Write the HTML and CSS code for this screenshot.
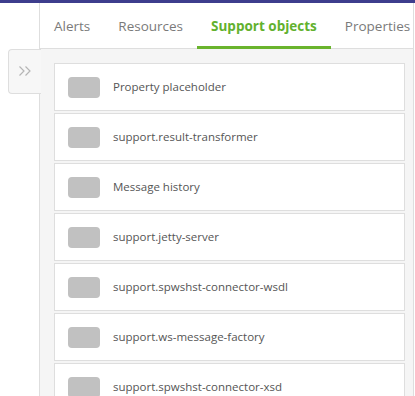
FILE: index.html
```html
<!DOCTYPE html>
<html>
<head>
<meta charset="utf-8">
<link rel="stylesheet" href="styles.css">
</head>
<body>
<div class="topbar"></div>
<div class="layout">
  <div class="sidebar">
    <div class="expand">
      <svg width="14" height="12" viewBox="0 0 14 12"><path d="M1.5 1.5 L6 6 L1.5 10.5 M7.5 1.5 L12 6 L7.5 10.5" fill="none" stroke="#b5b5b5" stroke-width="1.2"/></svg>
    </div>
  </div>
  <div class="panel">
    <div class="tabs">
      <div class="tab">Alerts</div>
      <div class="tab">Resources</div>
      <div class="tab active">Support objects</div>
      <div class="tab">Properties</div>
    </div>
    <div class="content">
      <div class="card"><span class="icon"></span><span class="label">Property placeholder</span></div>
      <div class="card"><span class="icon"></span><span class="label">support.result-transformer</span></div>
      <div class="card"><span class="icon"></span><span class="label">Message history</span></div>
      <div class="card"><span class="icon"></span><span class="label">support.jetty-server</span></div>
      <div class="card"><span class="icon"></span><span class="label">support.spwshst-connector-wsdl</span></div>
      <div class="card"><span class="icon"></span><span class="label">support.ws-message-factory</span></div>
      <div class="card"><span class="icon"></span><span class="label">support.spwshst-connector-xsd</span></div>
    </div>
  </div>
</div>
</body>
</html>
```
FILE: styles.css
```css
html, body {
  margin: 0;
  padding: 0;
  height: 100%;
  overflow: hidden;
  background: #fff;
  font-family: "Open Sans", "Liberation Sans", sans-serif;
}
.topbar {
  height: 3px;
  background: #3d3d8d;
}
.layout {
  display: flex;
  height: 393px;
}
.sidebar {
  width: 39px;
  flex: none;
  border-right: 1px solid #dedede;
  position: relative;
}
.expand {
  position: absolute;
  top: 46px;
  left: 8px;
  width: 31px;
  height: 42px;
  background: #f7f7f7;
  border: 1px solid #dedede;
  border-right: none;
  border-radius: 4px 0 0 4px;
  display: flex;
  align-items: center;
  justify-content: center;
  padding-right: 1px;
  padding-bottom: 1px;
}
.panel {
  width: 373px;
  flex: none;
  border-right: 1px solid #dedede;
  display: flex;
  flex-direction: column;
  overflow: hidden;
}
.tabs {
  display: flex;
  height: 45px;
  border-bottom: 1px solid #dedede;
  background: #fff;
}
.tab {
  padding: 2px 14px 0;
  font-size: 13.5px;
  color: #7a7a7a;
  display: flex;
  align-items: center;
  border-bottom: 3px solid transparent;
  box-sizing: border-box;
  height: 46px;
  white-space: nowrap;
  flex: none;
}
.tab.active {
  color: #62b12e;
  font-weight: bold;
  border-bottom-color: #6ab42d;
}
.content {
  flex: 1;
  background: #f5f5f5;
  padding: 14px 8px 0 14px;
  display: flex;
  flex-direction: column;
  gap: 2px;
  overflow: hidden;
}
.card {
  flex: none;
  height: 46px;
  background: #fff;
  border: 1px solid #dedede;
  display: flex;
  align-items: center;
  padding-left: 13px;
}
.icon {
  width: 32px;
  height: 21px;
  border-radius: 4px;
  background: #c1c1c1;
  margin-right: 13px;
}
.label {
  font-size: 11.5px;
  color: #555;
  padding-bottom: 1px;
}
```
